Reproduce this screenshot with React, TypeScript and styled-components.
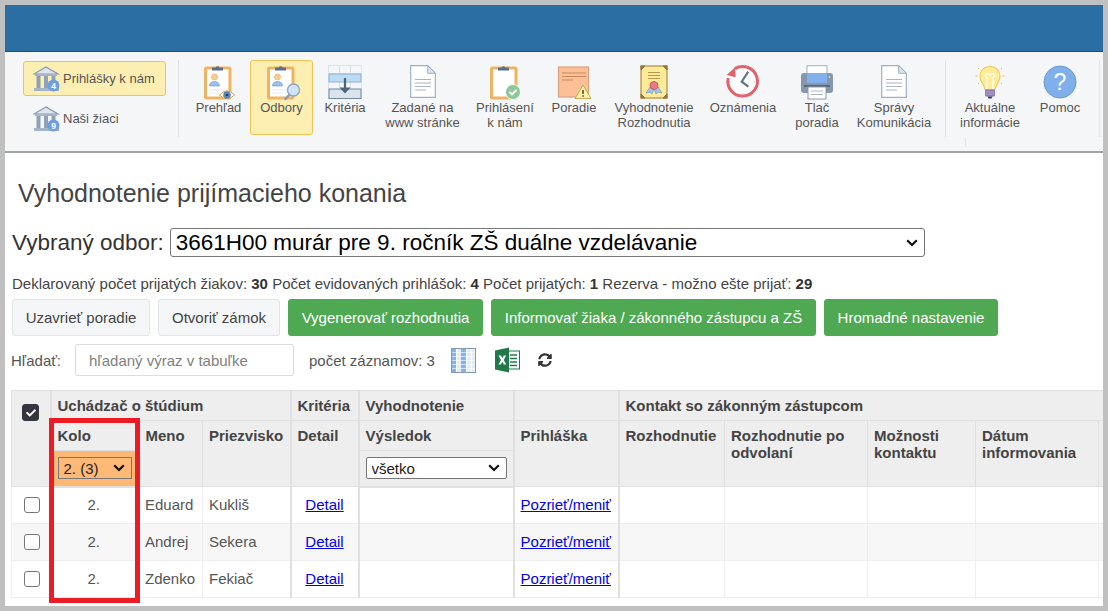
import React from 'react'
import styled, { createGlobalStyle, css } from 'styled-components'
import { FaCheck, FaSyncAlt } from 'react-icons/fa'

const GlobalStyle = createGlobalStyle`
    html, body {
        margin: 0;
        padding: 0;
        background: #c0c0c0;
    }
    body {
        font-family: "Liberation Sans", Arial, sans-serif;
        font-size: 15px;
        color: #444;
    }
`

const chevron = "url(\"data:image/svg+xml,%3Csvg xmlns='http://www.w3.org/2000/svg' width='12' height='8' viewBox='0 0 12 8'%3E%3Cpath d='M1.2 1.2 6 6l4.800-4.800' fill='none' stroke='%23111' stroke-width='2.200'/%3E%3C/svg%3E\")"

const selectBase = css`
    appearance: none;
    padding: 0 0 0 5px;
    font-family: inherit;
    background-image: ${chevron};
    background-repeat: no-repeat;
    background-position: right 6px center;
    border: 1px solid #767676;
`

const Frame = styled.div`
    box-sizing: border-box;
    width: 1108px;
    height: 611px;
    padding: 5px;
    overflow: hidden;
`

const Page = styled.div`
    height: 601px;
    background: #fff;
    overflow: hidden;
`

const TopBar = styled.div`
    height: 46px;
    background: #2b6ea3;
    border-bottom: 1px solid #1d4f78;
`

const Toolbar = styled.div`
    box-sizing: border-box;
    height: 101px;
    padding: 8px 0 0 18px;
    display: flex;
    align-items: flex-start;
    background: #f5f6f8;
    border-bottom: 2px solid #a2a4a7;
`

const SideGroup = styled.div`
    width: 143px;
    padding-top: 1px;
    display: flex;
    flex-direction: column;
    gap: 5px;
`

const SideButton = styled.div<{ $active?: boolean }>`
    box-sizing: border-box;
    height: 35px;
    padding-left: 9px;
    display: flex;
    align-items: center;
    gap: 2px;
    font-size: 13px;
    color: #555;
    border: 1px solid ${p => (p.$active ? '#f4c44e' : 'transparent')};
    border-radius: 3px;
    background: ${p => (p.$active ? '#fdeeb2' : 'transparent')};
`

const Divider = styled.div<{ $left: number; $right: number }>`
    width: 1px;
    height: 77px;
    margin: 0 ${p => p.$right}px 0 ${p => p.$left}px;
    background: #dfe1e4;
`

const ToolItem = styled.div<{ $w: number; $active?: boolean; $notch?: boolean }>`
    position: relative;
    box-sizing: border-box;
    width: ${p => p.$w}px;
    height: 75px;
    padding-top: 4px;
    display: flex;
    flex-direction: column;
    align-items: center;
    font-size: 13px;
    line-height: 15px;
    text-align: center;
    color: #555;
    border: 1px solid ${p => (p.$active ? '#f4c44e' : 'transparent')};
    border-radius: 3px;
    background: ${p => (p.$active ? '#fdeeb2' : 'transparent')};
    &::after {
        content: '';
        display: ${p => (p.$notch ? 'block' : 'none')};
        position: absolute;
        left: 12px;
        top: 77px;
        width: 1px;
        height: 8px;
        background: #dfe1e4;
    }
`

const IconBox = styled.div`
    height: 35px;
    display: flex;
    justify-content: center;
    align-items: flex-start;
    svg {
        overflow: visible;
    }
`

const Content = styled.div`
    padding: 26px 0 0 6px;
`

const Title = styled.h1`
    margin: 0 0 0 7px;
    font-size: 25px;
    line-height: 28px;
    font-weight: 400;
    color: #444;
`

const FieldRow = styled.div`
    margin: 21px 0 0 1px;
    display: flex;
    align-items: center;
    gap: 6px;
    font-size: 22.5px;
    color: #333;
`

const FieldSelect = styled.select`
    ${selectBase}
    width: 755px;
    height: 29px;
    font-size: 22.5px;
    color: #000;
    background-color: #fff;
    border-radius: 3px;
`

const Info = styled.div`
    margin: 19px 0 0 1px;
    height: 16px;
    font-size: 15px;
    line-height: 16px;
    color: #444;
    b {
        color: #333;
    }
`

const ButtonRow = styled.div`
    margin: 7px 0 0 1px;
    display: flex;
    gap: 8px;
`

const ActionButton = styled.button<{ $green?: boolean; $w: number }>`
    box-sizing: border-box;
    width: ${p => p.$w}px;
    height: 37px;
    padding: 0;
    font-family: inherit;
    font-size: 15px;
    color: ${p => (p.$green ? '#fff' : '#444')};
    background: ${p => (p.$green ? '#4fa953' : '#f5f6f8')};
    border: 1px solid ${p => (p.$green ? '#4fa953' : '#e3e4e7')};
    border-radius: 3px;
`

const SearchRow = styled.div`
    margin: 8px 0 0 0;
    height: 32px;
    display: flex;
    align-items: center;
    font-size: 15px;
    color: #555;
`

const SearchLabel = styled.span`
    width: 64px;
`

const SearchInput = styled.input`
    box-sizing: border-box;
    width: 219px;
    height: 32px;
    padding: 0 13px;
    font-family: inherit;
    font-size: 15px;
    color: #555;
    border: 1px solid #ddd;
    border-radius: 2px;
    &::placeholder {
        color: #808080;
        opacity: 1;
    }
`

const RecordCount = styled.span`
    margin-left: 15px;
    width: 142px;
`

const ExcelSlot = styled.span`
    margin-left: 19px;
    display: flex;
`

const RefreshSlot = styled.span`
    margin-left: 18px;
    display: flex;
    color: #333;
    font-size: 14px;
`

const TableWrap = styled.div`
    position: relative;
    margin-top: 14px;
    width: 1092px;
`

const Grid = styled.table`
    width: 1092px;
    table-layout: fixed;
    border-collapse: collapse;
    font-size: 15px;
`

const Head = styled.th<{ $thick?: boolean; $h?: number }>`
    box-sizing: border-box;
    height: ${p => p.$h ?? 29}px;
    padding: 6px 7px 6px 6px;
    vertical-align: top;
    text-align: left;
    font-weight: 700;
    line-height: 17px;
    color: #444;
    background: #eee;
    border: 1px solid #e0e0e0;
    border-right: ${p => (p.$thick ? '2px' : '1px')} solid #e0e0e0;
    border-bottom-width: 1px;
`

const FilterCell = styled.th<{ $hot?: boolean }>`
    box-sizing: border-box;
    height: 36px;
    padding: 0 6px;
    text-align: left;
    background: ${p => (p.$hot ? '#ffb977' : '#eee')};
    border: 1px solid #e0e0e0;
    border-right: 2px solid #e0e0e0;
    border-bottom: 2px solid #e0e0e0;
`

const Cell = styled.td<{ $thick?: boolean; $center?: boolean; $offset?: number }>`
    height: 37px;
    box-sizing: border-box;
    padding: 0 ${p => 7 - (p.$offset ?? 0)}px 2px ${p => (p.$center ? 7 + (p.$offset ?? 0) : 6)}px;
    text-align: ${p => (p.$center ? 'center' : 'left')};
    color: #555;
    border: 1px solid #eee;
    border-right: ${p => (p.$thick ? '2px solid #e0e0e0' : '1px solid #eee')};
    white-space: nowrap;
    overflow: hidden;
`

const Row = styled.tr<{ $alt?: boolean }>`
    background: ${p => (p.$alt ? '#f7f7f7' : '#fff')};
`

const FilterSelect = styled.select<{ $hot?: boolean; $w: number }>`
    ${selectBase}
    display: block;
    width: ${p => p.$w}px;
    height: 22px;
    font-size: 15px;
    color: #222;
    background-color: ${p => (p.$hot ? '#ffb977' : '#fff')};
    border-radius: ${p => (p.$hot ? '0' : '2px')};
`

const Tick = styled.span<{ $on?: boolean }>`
    box-sizing: border-box;
    width: ${p => (p.$on ? '17px' : '16px')};
    height: ${p => (p.$on ? '17px' : '16px')};
    margin: ${p => (p.$on ? '7px 0 0 4px' : '2px 0 0 6px')};
    display: flex;
    align-items: center;
    justify-content: center;
    color: #fff;
    font-size: 10px;
    background: ${p => (p.$on ? '#33363d' : '#fff')};
    border: 1px solid ${p => (p.$on ? '#33363d' : '#777')};
    border-radius: 3px;
`

const TextLink = styled.a`
    color: #0000ee;
    text-decoration: underline;
`

const Marker = styled.div`
    position: absolute;
    left: 38px;
    top: 28px;
    width: 91px;
    height: 185px;
    box-sizing: border-box;
    border: 5px solid #ed1c24;
    pointer-events: none;
`

const Bank = ({ n }: { n: string }) => (
    <svg width="28" height="28" viewBox="0 0 28 28">
        <path d="M1 9 13 2 25 9Z" fill="#dde4ec" stroke="#8b9db2" strokeWidth="1.2" />
        <rect x="2" y="9" width="22" height="2" fill="#a5b4c6" />
        <rect x="3.5" y="11" width="4" height="12" fill="#8fa1b6" />
        <rect x="11" y="11" width="4" height="12" fill="#8fa1b6" />
        <rect x="18.5" y="11" width="4" height="12" fill="#8fa1b6" />
        <rect x="1" y="23" width="25" height="3" fill="#a5b4c6" />
        <circle cx="20.5" cy="20.5" r="6" fill="#6f9fe3" />
        <text x="20.5" y="23.5" textAnchor="middle" fontSize="8.5" fontWeight="700" fill="#fff" fontFamily="Liberation Sans">{n}</text>
    </svg>
)

const Clipboard = ({ person = true }: { person?: boolean }) => (
    <>
        <rect x="1.5" y="3" width="24.500" height="30" rx="1" fill="#fff" stroke="#efb463" strokeWidth="3" />
        <path d="M8 5.500V2.500h3.800a2 2 0 0 1 3.600 0H19v3Z" fill="#5e6d88" />
        {person && (
            <>
                <circle cx="10.500" cy="12" r="3" fill="#f4cf8e" stroke="#e0a960" strokeWidth=".6" />
                <path d="M5.500 21c0-3 2-4.500 5-4.500s5 1.500 5 4.500Z" fill="#9cc2ea" stroke="#6c96c6" strokeWidth=".6" />
                <path d="M5.500 25h15M5.500 28h10" stroke="#e6e9ee" />
            </>
        )}
    </>
)

const EyeClip = () => (
    <svg width="30" height="35" viewBox="0 0 30 35">
        <Clipboard />
        <path d="M15.500 30q7.500-8.500 15 0-7.500 7.500-15 0Z" fill="#fff" stroke="#d8a44d" />
        <circle cx="23" cy="30" r="3.800" fill="#5b88bb" />
        <circle cx="23" cy="30" r="1.300" fill="#27405f" />
    </svg>
)

const SearchClip = () => (
    <svg width="30" height="35" viewBox="0 0 30 35">
        <Clipboard />
        <path d="M18.500 34l4.500-5" stroke="#8a9bb0" strokeWidth="2.600" strokeLinecap="round" />
        <circle cx="26.500" cy="25" r="6" fill="#cfe4f7" stroke="#8aa6c0" strokeWidth="1.300" />
    </svg>
)

const CheckClip = () => (
    <svg width="30" height="35" viewBox="0 0 30 35">
        <Clipboard person={false} />
        <circle cx="23" cy="27" r="7.500" fill="#8ec79a" stroke="#fff" strokeWidth=".8" />
        <path d="M19.500 27l2.500 2.500 4.500-4.500" fill="none" stroke="#fff" strokeWidth="1.800" />
    </svg>
)

const CriteriaIcon = () => (
    <svg width="34" height="35" viewBox="0 0 34 35">
        <rect x=".5" y=".5" width="33" height="33" fill="#f4f6f9" stroke="#dde2e9" />
        <path d="M11.500 1v33M22.500 1v33M1 8.500h32" stroke="#d9dfe7" />
        <rect x="1" y="9" width="32" height="8" fill="#bcdcf5" stroke="#8fb3d4" />
        <rect x="1" y="24" width="32" height="9.500" fill="#d9e4ee" stroke="#73879d" />
        <path d="M17 13v12" stroke="#4e627a" strokeWidth="2.200" />
        <path d="M11.500 22.500h11L17 28.500Z" fill="#4e627a" />
    </svg>
)

const DocIcon = () => (
    <svg width="26" height="33" viewBox="0 0 26 33">
        <path d="M.7.7h17l7.600 7.600v24h-24.600Z" fill="#fff" stroke="#9fb0c4" strokeWidth="1.200" />
        <path d="M17.700.7v7.600h7.600Z" fill="#dfe5ec" stroke="#9fb0c4" />
        <path d="M5 14.500h16M5 18h16M5 21.500h16M5 25h11" stroke="#a9b4c2" strokeWidth="1.100" />
    </svg>
)

const RankIcon = () => (
    <svg width="36" height="35" viewBox="0 0 36 35">
        <rect x="2.500" y="2" width="30" height="30" fill="#fdbf96" stroke="#d7a386" strokeWidth="1.200" />
        <path d="M6 8h24M6 11.500h24M6 15h11" stroke="#c98a60" />
        <path d="M27 20l8 13.500H19Z" fill="#fdf1a8" stroke="#c9a94e" />
        <path d="M27 25v4M27 30.200v1.500" stroke="#444" strokeWidth="1.500" />
    </svg>
)

const CertIcon = () => (
    <svg width="28" height="34" viewBox="0 0 28 34">
        <rect x="1" y="1" width="26" height="32" fill="#fdeb97" stroke="#bd9a53" strokeWidth="1.400" />
        <path d="M1 1h4L1 5ZM27 1h-4l4 4ZM1 33h4l-4-4ZM27 33h-4l4-4Z" fill="#94753d" stroke="#94753d" />
        <path d="M8 7.500h12M8 10.500h12M8 13.500h12" stroke="#b9974f" />
        <path d="M10 22l-4 6 4-.8 2 1.800 2-5 2 5 2-1.800 4 .8-4-6Z" fill="#9fc3ea" stroke="#6d94c0" strokeWidth=".6" />
        <circle cx="14" cy="20.500" r="4" fill="#ea7a82" stroke="#cf5a64" />
    </svg>
)

const ClockIcon = () => (
    <svg width="36" height="35" viewBox="0 0 36 35">
        <circle cx="17.700" cy="16.700" r="14.500" fill="#fdfdfd" />
        <path d="M10 3.600A14.800 14.800 0 1 1 3.200 13" fill="none" stroke="#e0646c" strokeWidth="3" />
        <path d="M1.700 10 10 2.300l.7 10Z" fill="#e0646c" />
        <circle cx="17.700" cy="4.800" r=".8" fill="#cfd6de" />
        <circle cx="17.700" cy="28.600" r=".8" fill="#cfd6de" />
        <circle cx="29.600" cy="16.700" r=".8" fill="#cfd6de" />
        <circle cx="5.800" cy="16.700" r=".8" fill="#cfd6de" />
        <path d="M23.300 6.700 16.700 16.700l6.600 5" fill="none" stroke="#5f7389" strokeWidth="2.200" />
    </svg>
)

const PrinterIcon = () => (
    <svg width="34" height="35" viewBox="0 0 34 35">
        <rect x="7" y=".7" width="20" height="16" fill="#fff" stroke="#a0aec0" />
        <rect x="1" y="8" width="32" height="20" rx="3" fill="#8497ac" />
        <rect x="7" y="8" width="20" height="10" fill="#82b0ea" />
        <rect x="4" y="20" width="26" height="2" fill="#56687d" />
        <rect x="8" y="22" width="18" height="12" fill="#fff" stroke="#8b9bae" />
        <path d="M11 26h12M11 29.500h12" stroke="#a9b6c5" />
        <circle cx="29.500" cy="12" r=".9" fill="#f4d679" />
    </svg>
)

const BulbIcon = () => (
    <svg width="30" height="35" viewBox="0 0 30 35">
        <path d="M15 1.500c-6 0-10 4.500-10 10 0 5 4 7 5 13h10c1-6 5-8 5-13 0-5.500-4-10-10-10Z" fill="#fdec98" stroke="#eecb5e" strokeWidth="1.200" />
        <path d="M12 24V13q-3-3 0-4.500 3 0 3 2.500 0-2.500 3-2.500 3 1.500 0 4.500v11" fill="none" stroke="#fff" strokeWidth="1.200" />
        <rect x="10" y="24.500" width="10" height="7" rx="1" fill="#8c7bb4" />
        <path d="M10.500 27h9M10.500 29.200h9" stroke="#c5bbdc" strokeWidth=".7" />
        <path d="M12.500 31.500h5l-1 2h-3Z" fill="#3d3a4d" />
        <path d="M15 0v.5M3 3l1 1M27 3l-1 1M.5 11h2M27.500 11h2M3 19l1-1M27 19l-1-1" stroke="#eeb94f" />
    </svg>
)

const HelpIcon = () => (
    <svg width="34" height="35" viewBox="0 0 34 35">
        <circle cx="17" cy="17" r="16" fill="#80b0eb" stroke="#6b96ce" />
        <text x="17" y="25" textAnchor="middle" fontSize="23" fontWeight="400" fill="#fff" fontFamily="Liberation Sans">?</text>
    </svg>
)

const ColumnsIcon = () => (
    <svg width="25" height="25" viewBox="0 0 25 25">
        <rect width="25" height="25" fill="#e3ebf3" />
        <rect x="0" width="5" height="25" fill="#7fb6f2" />
        <rect x="10" width="5" height="25" fill="#7fb6f2" />
        <path d="M0 4.500h25M0 8.500h25M0 12.500h25M0 16.500h25M0 20.500h25" stroke="#fff" strokeOpacity=".6" />
        <path d="M5.500 0v25M15.500 0v25M20.500 0v25" stroke="#fff" />
        <rect x=".5" y=".5" width="24" height="24" fill="none" stroke="#8a99a9" />
    </svg>
)

const ExcelIcon = () => (
    <svg width="25" height="26" viewBox="0 0 25 26">
        <rect x="12" y="4" width="12.500" height="18" fill="#fff" stroke="#21794a" />
        <path d="M15 8h7M15 11.500h7M15 15h7M15 18.500h7" stroke="#21794a" strokeWidth="1.400" />
        <path d="M0 3.500 14 .5v25L0 22.500Z" fill="#21794a" />
        <path d="M3.500 8.500h2.400l1.400 2.800 1.500-2.800h2.300L8.700 13l2.500 4.500H8.800L7.300 14.700l-1.500 2.800H3.500L6 13Z" fill="#fff" />
    </svg>
)

const people = [
    ['Eduard', 'Kukliš'],
    ['Andrej', 'Sekera'],
    ['Zdenko', 'Fekiač'],
]

const widths = [39, 88, 64, 88, 68, 155, 105, 106, 143, 108, 123, 5]

export default function App() {
    return (
        <Frame>
            <GlobalStyle />
            <Page>
                <TopBar />
                <Toolbar>
                    <SideGroup>
                        <SideButton $active><Bank n="4" />Prihlášky k nám</SideButton>
                        <SideButton><Bank n="9" />Naši žiaci</SideButton>
                    </SideGroup>
                    <Divider $left={12} $right={8} />
                    <ToolItem $w={63}><IconBox><EyeClip /></IconBox>Prehľad</ToolItem>
                    <ToolItem $w={63} $active><IconBox><SearchClip /></IconBox>Odbory</ToolItem>
                    <ToolItem $w={64}><IconBox><CriteriaIcon /></IconBox>Kritéria</ToolItem>
                    <ToolItem $w={91}><IconBox><DocIcon /></IconBox>Zadané na<br />www stránke</ToolItem>
                    <ToolItem $w={74}><IconBox><CheckClip /></IconBox>Prihlásení<br />k nám</ToolItem>
                    <ToolItem $w={64}><IconBox><RankIcon /></IconBox>Poradie</ToolItem>
                    <ToolItem $w={96}><IconBox><CertIcon /></IconBox>Vyhodnotenie<br />Rozhodnutia</ToolItem>
                    <ToolItem $w={82}><IconBox><ClockIcon /></IconBox>Oznámenia</ToolItem>
                    <ToolItem $w={66}><IconBox><PrinterIcon /></IconBox>Tlač<br />poradia</ToolItem>
                    <ToolItem $w={88}><IconBox><DocIcon /></IconBox>Správy<br />Komunikácia</ToolItem>
                    <Divider $left={7} $right={6} />
                    <ToolItem $w={76} $notch><IconBox><BulbIcon /></IconBox>Aktuálne<br />informácie</ToolItem>
                    <ToolItem $w={64}><IconBox><HelpIcon /></IconBox>Pomoc</ToolItem>
                    <Divider $left={7} $right={0} />
                </Toolbar>
                <Content>
                    <Title>Vyhodnotenie prijímacieho konania</Title>
                    <FieldRow>
                        Vybraný odbor:
                        <FieldSelect>
                            <option>3661H00 murár pre 9. ročník ZŠ duálne vzdelávanie</option>
                        </FieldSelect>
                    </FieldRow>
                    <Info>
                        Deklarovaný počet prijatých žiakov: <b>30</b> Počet evidovaných prihlášok: <b>4</b> Počet prijatých: <b>1</b> Rezerva - možno ešte prijať: <b>29</b>
                    </Info>
                    <ButtonRow>
                        <ActionButton $w={138}>Uzavrieť poradie</ActionButton>
                        <ActionButton $w={122}>Otvoriť zámok</ActionButton>
                        <ActionButton $w={195} $green>Vygenerovať rozhodnutia</ActionButton>
                        <ActionButton $w={325} $green>Informovať žiaka / zákonného zástupcu a ZŠ</ActionButton>
                        <ActionButton $w={174} $green>Hromadné nastavenie</ActionButton>
                    </ButtonRow>
                    <SearchRow>
                        <SearchLabel>Hľadať:</SearchLabel>
                        <SearchInput placeholder="hľadaný výraz v tabuľke" />
                        <RecordCount>počet záznamov: 3</RecordCount>
                        <ColumnsIcon />
                        <ExcelSlot><ExcelIcon /></ExcelSlot>
                        <RefreshSlot><FaSyncAlt /></RefreshSlot>
                    </SearchRow>
                    <TableWrap>
                        <Grid>
                            <colgroup>
                                {widths.map((w, i) => <col key={i} style={{ width: w }} />)}
                            </colgroup>
                            <thead>
                                <tr>
                                    <Head $h={30} $thick rowSpan={3}><Tick $on><FaCheck /></Tick></Head>
                                    <Head $h={30} $thick colSpan={3}>Uchádzač o štúdium</Head>
                                    <Head $h={30} $thick>Kritéria</Head>
                                    <Head $h={30} $thick>Vyhodnotenie</Head>
                                    <Head $h={30} $thick />
                                    <Head $h={30} colSpan={5}>Kontakt so zákonným zástupcom</Head>
                                </tr>
                                <tr>
                                    <Head>Kolo</Head>
                                    <Head rowSpan={2}>Meno</Head>
                                    <Head $thick rowSpan={2}>Priezvisko</Head>
                                    <Head $thick rowSpan={2}>Detail</Head>
                                    <Head $thick>Výsledok</Head>
                                    <Head $thick rowSpan={2}>Prihláška</Head>
                                    <Head rowSpan={2}>Rozhodnutie</Head>
                                    <Head rowSpan={2}>Rozhodnutie po odvolaní</Head>
                                    <Head rowSpan={2}>Možnosti kontaktu</Head>
                                    <Head rowSpan={2}>Dátum informovania</Head>
                                    <Head rowSpan={2} />
                                </tr>
                                <tr>
                                    <FilterCell $hot>
                                        <FilterSelect $hot $w={74}><option>2. (3)</option></FilterSelect>
                                    </FilterCell>
                                    <FilterCell>
                                        <FilterSelect $w={141}><option>všetko</option></FilterSelect>
                                    </FilterCell>
                                </tr>
                            </thead>
                            <tbody>
                                {people.map(([name, surname], i) => (
                                    <Row key={name} $alt={i === 1}>
                                        <Cell $thick><Tick /></Cell>
                                        <Cell $center $offset={-1}>2.</Cell>
                                        <Cell>{name}</Cell>
                                        <Cell $thick>{surname}</Cell>
                                        <Cell $thick $center><TextLink href="#">Detail</TextLink></Cell>
                                        <Cell $thick />
                                        <Cell $thick><TextLink href="#">Pozrieť/meniť</TextLink></Cell>
                                        <Cell />
                                        <Cell />
                                        <Cell />
                                        <Cell />
                                        <Cell />
                                    </Row>
                                ))}
                            </tbody>
                        </Grid>
                        <Marker />
                    </TableWrap>
                </Content>
            </Page>
        </Frame>
    )
}
